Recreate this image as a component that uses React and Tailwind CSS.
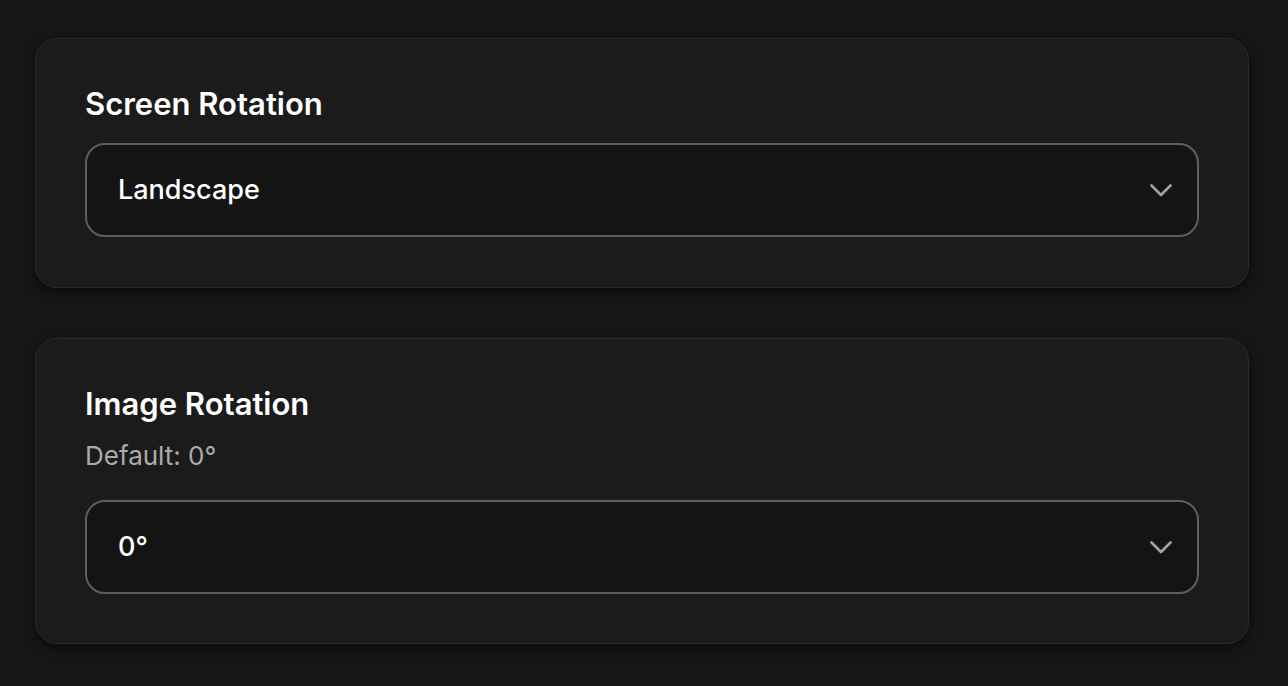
const Chevron = () => (
  <svg width="22" height="13" viewBox="0 0 22 13" fill="none" className="text-[#a3a3a3]">
    <polyline points="1.5,1.5 11,11 20.5,1.5" stroke="currentColor" strokeWidth="2.6" strokeLinecap="round" strokeLinejoin="round" />
  </svg>
);

const Select = ({ value }) => (
  <div className="flex h-[94px] items-center justify-between rounded-[20px] border-2 border-[#5e5e5e] bg-[#141414] pl-[31px] pr-[25px]">
    <span className="text-[27px] font-medium text-white">{value}</span>
    <Chevron />
  </div>
);

const App = () => {
  return (
    <div
      className="min-h-screen bg-[#161616] pl-[35px] pt-[38px] pb-[40px] flex flex-col gap-[50px]"
      style={{ fontFamily: "Inter, 'Noto Sans', sans-serif" }}
    >
      {/* Screen rotation */}
      <section className="w-[1214px] rounded-[22px] border border-[#2a2a2a] bg-[#1b1b1b] px-[49px] pt-[47px] pb-[50px] shadow-[0_4px_10px_rgba(0,0,0,0.5)]">
        <h2 className="text-[31px] leading-[36px] font-semibold text-white mb-[21px]">Screen Rotation</h2>
        <Select value="Landscape" />
      </section>

      {/* Image rotation */}
      <section className="w-[1214px] rounded-[22px] border border-[#2a2a2a] bg-[#1b1b1b] px-[49px] pt-[47px] pb-[49px] shadow-[0_4px_10px_rgba(0,0,0,0.5)]">
        <h2 className="text-[31px] leading-[36px] font-semibold text-white">Image Rotation</h2>
        <p className="mt-[18px] text-[26px] leading-[32px] text-[#ababab]">Default: 0°</p>
        <div className="mt-[28px]">
          <Select value="0°" />
        </div>
      </section>
    </div>
  );
};

export default App;
